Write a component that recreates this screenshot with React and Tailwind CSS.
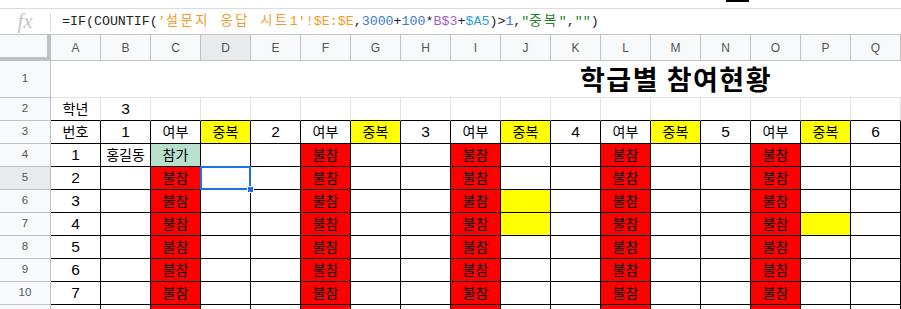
import React from 'react';

const COLS = ['A', 'B', 'C', 'D', 'E', 'F', 'G', 'H', 'I', 'J', 'K', 'L', 'M', 'N', 'O', 'P', 'Q'];

const HEAD = ['번호', '1', '여부', '중복', '2', '여부', '중복', '3', '여부', '중복', '4', '여부', '중복', '5', '여부', '중복', '6'];

const RED_COLS = [5, 8, 11, 14];

// yellow duplicate flags, keyed by row number
const YELLOW = { 6: [9], 7: [9, 15] };

function buildRow(r) {
  const cells = COLS.map(() => ({ text: '', bg: '' }));
  // row 11 only peeks in at the bottom edge, so no text there
  const label = r < 11;
  cells[0].text = label ? String(r - 3) : '';
  if (r === 4) {
    cells[1].text = '홍길동';
    cells[2] = { text: '참가', bg: 'green' };
  } else {
    cells[2] = { text: label ? '불참' : '', bg: 'red' };
  }
  RED_COLS.forEach((c) => { cells[c] = { text: label ? '불참' : '', bg: 'red' }; });
  (YELLOW[r] || []).forEach((c) => { cells[c] = { text: '', bg: 'yellow' }; });
  return cells;
}

const isKorean = (t) => /[가-힣]/.test(t);

function RowHead({ n, h, active }) {
  return (
    <div
      className={`${h} w-[51px] shrink-0 flex items-center justify-center border-r border-b border-[#c0c0c0] text-[11.5px] text-[#555] ${active ? 'bg-[#e8eaed]' : 'bg-[#f8f9fa]'}`}
    >
      {n}
    </div>
  );
}

function Cell({ cell, selected }) {
  let bg = 'bg-white';
  if (cell.bg === 'red') bg = 'bg-[#ff0000]';
  if (cell.bg === 'green') bg = 'bg-[#b7e1cd]';
  if (cell.bg === 'yellow') bg = 'bg-[#ffff00]';
  return (
    <div
      className={`relative w-[50px] h-full shrink-0 flex items-center justify-center border-r border-b border-black text-black ${bg} ${isKorean(cell.text) ? 'text-[14px]' : 'text-[15.5px]'} ${selected ? 'z-10' : ''}`}
    >
      {cell.text}
      {selected && (
        <>
          <div className="absolute -left-[1px] -top-[1px] w-[51px] h-[24px] border-2 border-[#1a73e8]" />
          <div className="absolute -right-[4px] -bottom-[4px] w-[7px] h-[7px] bg-[#1a73e8] border border-white" />
        </>
      )}
    </div>
  );
}

function Formula() {
  return (
    <div className="text-[13.3px] text-[#222] whitespace-nowrap" style={{ fontFamily: '"Liberation Mono", "Noto Sans CJK KR", monospace' }}>
      <span>=IF(COUNTIF(</span>
      <span className="text-[#f29b2c]">'<span className="tracking-[2.5px]">설문지 응답 시트</span>1'!$E:$E</span>
      <span>,</span>
      <span className="text-[#3c78d8]">3000</span>
      <span>+</span>
      <span className="text-[#3c78d8]">100</span>
      <span>*</span>
      <span className="text-[#a35ec8]">B$3</span>
      <span>+</span>
      <span className="text-[#2d9ee0]">$A5</span>
      <span>)&gt;</span>
      <span className="text-[#3c78d8]">1</span>
      <span>,</span>
      <span className="text-[#1b7f2a]">"<span className="tracking-[2.5px]">중복</span>"</span>
      <span>,</span>
      <span className="text-[#1b7f2a]">""</span>
      <span>)</span>
    </div>
  );
}

export default function App() {
  const rows = [4, 5, 6, 7, 8, 9, 10, 11];
  return (
    <div className="w-[901px] h-[309px] overflow-hidden bg-white" style={{ fontFamily: '"Liberation Sans", "Noto Sans CJK KR", sans-serif' }}>
      {/* toolbar edge */}
      <div className="h-[9px] border-b border-[#dadce0] flex">
        <div className="ml-[726px] w-[23px] h-[2px] bg-black" />
      </div>

      {/* formula bar */}
      <div className="h-[26px] border-b border-[#c4c4c4] flex items-center">
        <div className="w-[50px] flex justify-center text-[21px] italic text-[#c4c7c5] leading-none" style={{ fontFamily: '"Liberation Serif", serif' }}>
          fx
        </div>
        <div className="w-px h-[18px] bg-[#dadce0]" />
        <div className="pl-[11px]">
          <Formula />
        </div>
      </div>

      {/* column headers */}
      <div className="flex h-[26px]">
        <div className="w-[51px] shrink-0 bg-[#f8f9fa] border-r-4 border-b-4 border-[#c0c0c0]" />
        {COLS.map((c) => (
          <div
            key={c}
            className={`w-[50px] shrink-0 flex items-center justify-center border-r border-b border-[#c0c0c0] text-[12px] text-[#555] ${c === 'D' ? 'bg-[#e8eaed]' : 'bg-[#f8f9fa]'}`}
          >
            {c}
          </div>
        ))}
      </div>

      {/* row 1: title */}
      <div className="flex h-[37px]">
        <RowHead n={1} h="h-[37px]" />
        <div className="flex-1 flex items-center pl-[529px] border-b border-[#e2e2e2]">
          <span className="text-[27px] tracking-[1.5px] font-bold text-black" style={{ fontFamily: '"Noto Sans CJK KR", sans-serif' }}>
            학급별 참여현황
          </span>
        </div>
      </div>

      {/* row 2 */}
      <div className="flex h-[23px]">
        <RowHead n={2} h="h-[23px]" />
        {COLS.map((c, i) => (
          <div
            key={c}
            className={`w-[50px] shrink-0 flex items-center justify-center border-r border-[#e2e2e2] border-b border-b-black text-black ${i === 0 ? 'text-[14px]' : 'text-[15.5px]'}`}
          >
            {i === 0 ? '학년' : i === 1 ? '3' : ''}
          </div>
        ))}
      </div>

      {/* row 3: headings */}
      <div className="flex h-[23px]">
        <RowHead n={3} h="h-[23px]" />
        {HEAD.map((t, i) => (
          <Cell key={i} cell={{ text: t, bg: t === '중복' ? 'yellow' : '' }} />
        ))}
      </div>

      {rows.map((r) => (
        <div key={r} className="flex h-[23px]">
          <RowHead n={r < 11 ? r : ''} h="h-[23px]" active={r === 5} />
          {buildRow(r).map((cell, i) => (
            <Cell key={i} cell={cell} selected={r === 5 && i === 3} />
          ))}
        </div>
      ))}
    </div>
  );
}
